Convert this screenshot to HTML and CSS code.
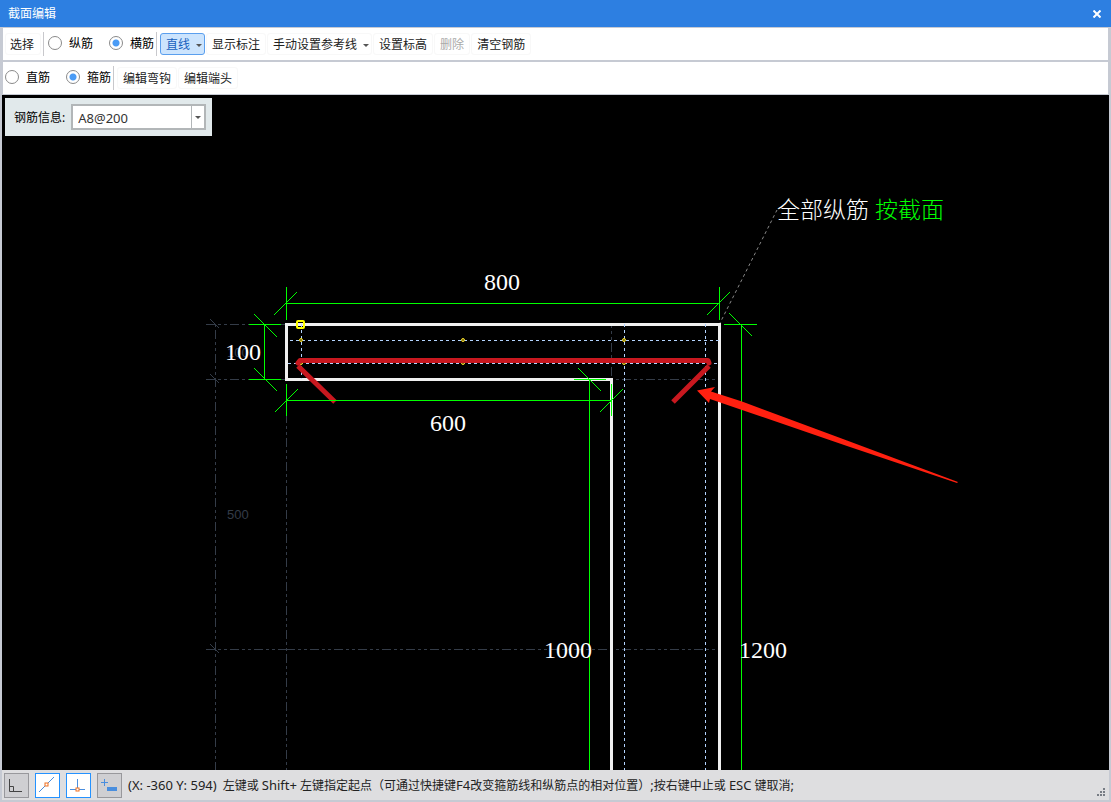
FILE: index.html
```html
<!DOCTYPE html>
<html lang="zh-CN">
<head>
<meta charset="utf-8">
<title>截面编辑</title>
<link rel="stylesheet" href="styles.css">
</head>
<body>
<header class="titlebar">
  <h1 class="title">截面编辑</h1>
  <button class="close" type="button" aria-label="关闭"><svg width="8" height="8" viewBox="0 0 8 8"><path d="M0.5 0.5L7.5 7.5M7.5 0.5L0.5 7.5"/></svg></button>
</header>
<div class="toolbars">
  <div class="toolbar">
    <button class="tool select" type="button">选择</button>
    <div class="options">
      <label class="option"><input type="radio" name="bar"><span>纵筋</span></label>
      <label class="option"><input type="radio" name="bar" checked><span>横筋</span></label>
    </div>
    <div class="tools">
      <button class="tool menu active" type="button">直线<span class="caret"></span></button>
      <button class="tool" type="button">显示标注</button>
      <button class="tool menu" type="button">手动设置参考线<span class="caret"></span></button>
      <button class="tool" type="button">设置标高</button>
      <button class="tool" type="button" disabled>删除</button>
      <button class="tool" type="button">清空钢筋</button>
    </div>
  </div>
  <div class="toolbar">
    <div class="options first">
      <label class="option"><input type="radio" name="shape"><span>直筋</span></label>
      <label class="option"><input type="radio" name="shape" checked><span>箍筋</span></label>
    </div>
    <div class="tools">
      <button class="tool" type="button">编辑弯钩</button>
      <button class="tool" type="button">编辑端头</button>
    </div>
  </div>
</div>
<main class="canvas">
  <svg class="drawing">
    <g transform="translate(-2 -95)">
      <g class="grid">
        <path d="M206 324.5H285M206 379.5H285M206 649.5H286M286 649.5H719"/>
        <path d="M215.5 324V1600" stroke-dashoffset="18"/>
        <path d="M286.5 381V1600" stroke-dashoffset="15"/>
        <path d="M612 379.5H718" stroke-dashoffset="14"/>
        <path d="M611.5 326V378" stroke-dashoffset="7"/>
        <path class="solid" d="M210 319L219 328M210 374L219 383M210 644L219 653"/>
      </g>
      <text class="note" x="227" y="357">100</text>
      <text class="note" x="227" y="519">500</text>
      <path class="leader" d="M719 325L777 210"/>
      <path class="outline" d="M611.5 1600V379.5H286.5V324.5H719.5V1600"/>
      <path class="rebar" d="M290 340.5H719M288 363.5H720M301.5 324V379M624.5 324V1600M705.5 324V1600"/>
      <g class="node">
        <circle cx="301" cy="340" r="1.5"/><circle cx="463" cy="340" r="1.5"/><circle cx="624" cy="340" r="1.5"/>
        <circle cx="301" cy="363" r="1.5"/><circle cx="463" cy="363" r="1.5"/><circle cx="624" cy="363" r="1.5"/>
      </g>
      <g class="hoop">
        <path d="M298 363L300 360.5H708L709 363" stroke-linecap="round" stroke-linejoin="round"/>
        <path d="M298 366L335 402M709 366L673 402"/>
      </g>
      <rect class="grip" x="297" y="321" width="7" height="7" rx="1"/>
      <g class="dimension">
        <path d="M286 303.5H719M286.5 287V320M719.5 287V320M274 315L297 292M707 315L730 292"/>
        <path d="M264.5 324V379M249 324.5H281M249 379.5H281M254 314L277 337M254 368L277 391"/>
        <path d="M286 400.5H612M286.5 384V416M611.5 384V416M275 412L298 389M600 412L623 389"/>
        <path d="M741.5 324V1600M724 324.5H757M729 313L752 336"/>
        <path d="M589.5 379V1600M574 379.5H606M578 368L601 391"/>
      </g>
      <path class="arrow" d="M697 390.5L715 387L711 391.5L742 401.5L847 440.5L958 482L957 483L847 446L742 410L710 399L709 403Z"/>
      <g class="value">
        <text x="484" y="290">800</text>
        <text x="225" y="360">100</text>
        <text x="430" y="431">600</text>
        <text x="544" y="658">1000</text>
        <text x="739" y="658">1200</text>
      </g>
      <text class="caption" x="777" y="218">全部纵筋</text>
      <text class="caption green" x="875" y="218">按截面</text>
    </g>
  </svg>
  <div class="info">
    <label for="rebar-info">钢筋信息:</label>
    <div class="combo">
      <select id="rebar-info"><option>A8@200</option></select>
      <span class="drop"><span class="caret"></span></span>
    </div>
  </div>
</main>
<footer class="status">
  <button class="mode" type="button" aria-label="正交"><svg width="23" height="23"><path class="ink" d="M4.500 5V17.500H17M4.500 12.500H8.500V17"/></svg></button>
  <button class="mode on" type="button" aria-label="中点"><svg width="23" height="23"><path class="blue" d="M3 18L18 3"/><rect class="mark" x="9" y="9" width="3" height="3"/></svg></button>
  <button class="mode on" type="button" aria-label="垂点"><svg width="23" height="23"><path class="blue" d="M10.500 5V15M3 15.500H18"/><rect class="mark" x="9" y="14" width="3" height="3"/></svg></button>
  <button class="mode" type="button" aria-label="动态输入"><svg width="23" height="23"><path class="blue" d="M6.500 5V12M3 8.500H10"/><rect class="fill" x="9" y="13" width="10" height="4"/></svg></button>
  <p class="hint"><span class="latin">(X: -360 Y: 594)</span><span>左键或 <span class="latin">Shift+</span> 左键指定起点（可通过快捷键<span class="latin">F4</span>改变箍筋线和纵筋点的相对位置）<span class="latin">;</span>按右键中止或 <span class="latin">ESC</span> 键取消<span class="latin">;</span></span></p>
  <svg class="resize" width="8" height="8"><path d="M6 0h2v2h-2zM3 3h2v2h-2zM6 3h2v2h-2zM0 6h2v2h-2zM3 6h2v2h-2zM6 6h2v2h-2z"/></svg>
</footer>
</body>
</html>
```
FILE: styles.css
```css
* { box-sizing: border-box; }

body {
  margin: 0;
  height: 100vh;
  display: flex;
  flex-direction: column;
  background: #c6cad3;
  color: #222;
  font: 12px/16px "Noto Sans", "Noto Sans CJK SC", sans-serif;
}

button, select { font: inherit; color: inherit; }

.titlebar {
  display: flex;
  align-items: center;
  justify-content: space-between;
  height: 27px;
  padding: 1px 10px 0 8px;
  background: #2d7fe1;
  color: #fff;
}
.title { margin: 0; font-size: 12px; font-weight: 400; }
.close { display: flex; padding: 0; border: 0; background: none; }
.close path { stroke: #fff; stroke-width: 2; }

.toolbars {
  display: flex;
  flex-direction: column;
  gap: 2px;
  padding: 1px 3px;
}
.toolbar {
  display: flex;
  align-items: center;
  height: 32px;
  padding-left: 2px;
  background: #fff;
}
.tools { display: flex; gap: 1px; padding-left: 3px; }
.tool {
  display: flex;
  align-items: center;
  gap: 6px;
  height: 22px;
  padding: 2px 5px 0;
  border: 1px solid #f8f8f8;
  border-radius: 3px;
  background: none;
  white-space: nowrap;
}
.tool:disabled { color: #aaa; }
.tool.select { padding-left: 4px; padding-right: 6px; }
.tool.menu { padding-right: 2px; }
.tool.active { border-color: #5a9fee; background: #cce4fd; color: #1560bd; }
.caret {
  border: 3px solid transparent;
  border-top-color: #555;
  border-bottom: 0;
}
.options {
  display: flex;
  gap: 16px;
  height: 24px;
  margin-left: 2px;
  padding: 0 2px 2px 4px;
  border: solid #c8c8cc;
  border-width: 0 1px;
  color: #000;
}
.options.first { margin-left: 0; padding-left: 0; border-left: 0; }
.option { display: flex; align-items: center; gap: 7px; white-space: nowrap; }
.option span { padding-top: 2px; }
.option input {
  appearance: none;
  width: 14px;
  height: 14px;
  margin: 0;
  border: 1px solid #8a8a8a;
  border-radius: 50%;
}
.option input:checked { background: radial-gradient(circle, #4a9bf5 0 3px, transparent 4px); }

.canvas {
  position: relative;
  flex: 1;
  min-height: 0;
  margin: 0 2px;
  background: #000;
}
.drawing { position: absolute; width: 100%; height: 100%; }
.drawing path { fill: none; }
.grid path { stroke: #343c48; stroke-dasharray: 9 3 3 3 3 3; }
.grid .solid { stroke-dasharray: none; }
.note { fill: #343c48; font: 13px "Liberation Sans", sans-serif; }
.leader { stroke: #888; stroke-dasharray: 3 3; }
.outline { stroke: #f0f0f0; stroke-width: 3; }
.rebar { stroke: #b4d4ff; stroke-dasharray: 3 3; }
.node circle { fill: #665c14; stroke: #f6dc28; }
.hoop path { stroke: #c8181f; stroke-width: 5; }
.grip { fill: none; stroke: #ff0; stroke-width: 2; }
.dimension path { stroke: #0f0; }
.drawing .arrow { fill: #ff2010; }
.value { fill: #fff; font: 24px "Liberation Serif", serif; }
.caption { fill: #fff; font: 300 23px "Noto Sans CJK SC", sans-serif; }
.green { fill: #0f0; }

.info {
  position: absolute;
  top: 3px;
  left: 3px;
  display: flex;
  align-items: center;
  gap: 6px;
  height: 38px;
  padding: 0 6px 0 9px;
  background: #e1e9eb;
  color: #000;
}
.info label { padding-top: 2px; }
.combo { position: relative; width: 135px; height: 26px; }
.combo select {
  appearance: none;
  width: 100%;
  height: 100%;
  padding: 2px 20px 0 5px;
  border: 2px solid #b2b6b8;
  border-radius: 0;
  background: #fff;
  color: #333;
  font-size: 13px;
}
.drop {
  position: absolute;
  inset: 2px 2px 2px auto;
  display: flex;
  align-items: center;
  justify-content: center;
  width: 13px;
  border-left: 1px solid #b2b6b8;
  pointer-events: none;
}

.status {
  display: flex;
  align-items: center;
  gap: 6px;
  height: 30px;
  margin: 0 2px 2px;
  padding: 0 4px 0 2px;
  background: #dedee0;
}
.mode {
  flex: none;
  display: flex;
  width: 25px;
  height: 25px;
  padding: 0;
  border: 1px solid #98989c;
  background: #cfcfd2;
}
.mode.on { border-color: #2492ff; background: #fff; }
.mode path { fill: none; }
.ink { stroke: #444; }
.blue { stroke: #4a8ede; }
.fill { fill: #4a8ede; }
.mark { fill: #fff; stroke: #f07020; }
.hint {
  display: flex;
  flex: 1;
  align-items: baseline;
  gap: 6px;
  margin: 0;
  padding-top: 1px;
  white-space: nowrap;
}
.latin { font-size: 13px; }
.resize { align-self: flex-end; margin-bottom: 4px; fill: #777c84; }
```
